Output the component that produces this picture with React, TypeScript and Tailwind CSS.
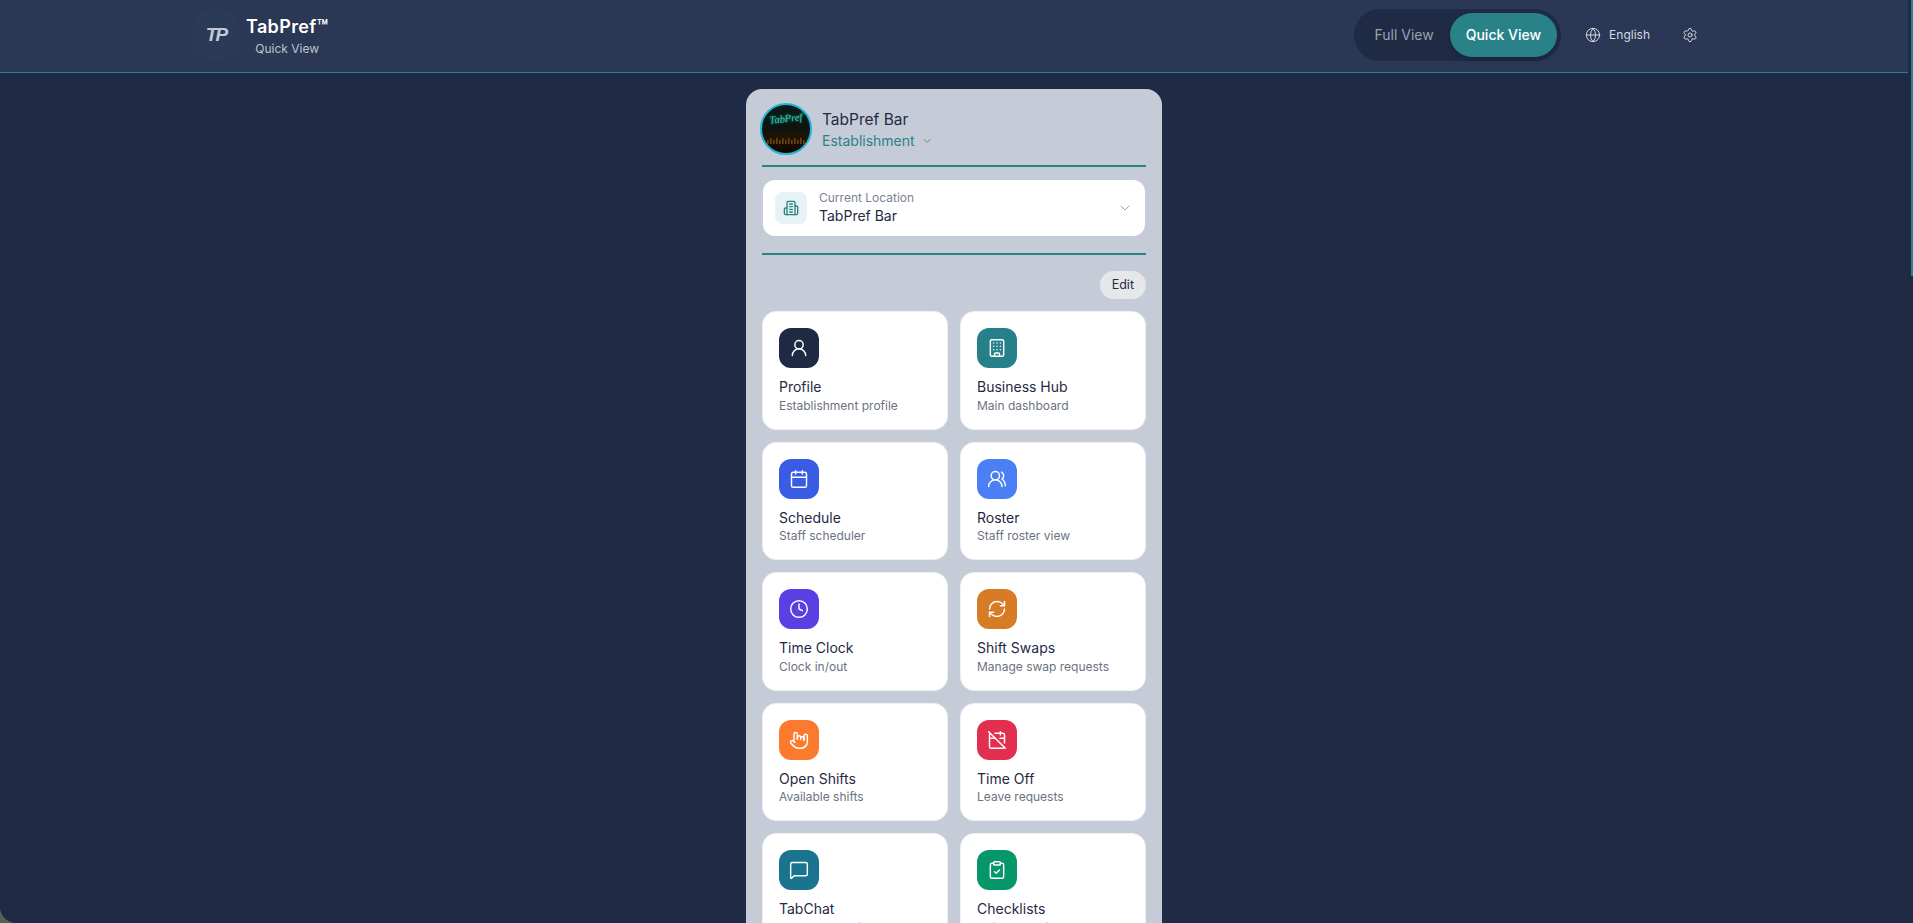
import { Building, Calendar, CalendarOff, ChevronDown, ClipboardCheck, Clock, Globe, HandMetal, MessageSquare, RefreshCw, Settings, UserRound, UsersRound } from "lucide-react";

const items = [
  { t: "Profile", d: "Establishment profile", c: "bg-[#1e2a44]", I: UserRound },
  { t: "Business Hub", d: "Main dashboard", c: "bg-[#26808a]", I: Building },
  { t: "Schedule", d: "Staff scheduler", c: "bg-[#3a5ce5]", I: Calendar },
  { t: "Roster", d: "Staff roster view", c: "bg-[#4a7ff5]", I: UsersRound },
  { t: "Time Clock", d: "Clock in/out", c: "bg-[#5a3fe3]", I: Clock },
  { t: "Shift Swaps", d: "Manage swap requests", c: "bg-[#d77b25]", I: RefreshCw },
  { t: "Open Shifts", d: "Available shifts", c: "bg-[#fb7a2e]", I: HandMetal },
  { t: "Time Off", d: "Leave requests", c: "bg-[#e22f50]", I: CalendarOff },
  { t: "TabChat", d: "Team messaging", c: "bg-[#1a7490]", I: MessageSquare },
  { t: "Checklists", d: "Daily checklists", c: "bg-[#059669]", I: ClipboardCheck },
];

function LocationIcon() {
  return (
    <svg width="16" height="16" viewBox="0 0 24 24" fill="none" stroke="currentColor" strokeWidth="2" strokeLinecap="round" strokeLinejoin="round">
      <path d="M6 22V4a2 2 0 0 1 2-2h8a2 2 0 0 1 2 2v18Z" />
      <path d="M6 12H4a2 2 0 0 0-2 2v6a2 2 0 0 0 2 2h2" />
      <path d="M18 9h2a2 2 0 0 1 2 2v9a2 2 0 0 1-2 2h-2" />
      <path d="M10 6h4" />
      <path d="M10 10h4" />
      <path d="M10 14h4" />
      <path d="M10 18h4" />
    </svg>
  );
}

export default function App() {
  return (
    <div className="h-screen overflow-hidden bg-[#55625c] font-['Inter',sans-serif]">
      <div className="relative flex h-full flex-col overflow-hidden rounded-bl-[16px] bg-[#1f2a44] pr-[5px]">
        <header className="flex h-[73px] shrink-0 items-center justify-between border-b border-[#2a8289] bg-[#2a3855] pl-[190px] pr-[210px]">
          <div className="-mt-[2px] flex items-center gap-1">
            <div className="flex h-[52px] w-[52px] items-center justify-center rounded-full bg-[#2b3a57]">
              <span className="-mt-[2px] font-['Liberation_Sans',sans-serif] text-[19px] font-black italic leading-none tracking-[-2px] text-[#c3cad6]">TP</span>
            </div>
            <div className="flex flex-col items-center">
              <div className="text-lg font-semibold leading-7 tracking-[0.02em] text-white">TabPref™</div>
              <div className="text-xs leading-4 text-[#bcc3cf]">Quick View</div>
            </div>
          </div>
          <div className="-mt-[2px] flex items-center">
            <div className="flex h-[52px] items-center rounded-full bg-[#1f2a44] p-1">
              <button className="h-11 rounded-full px-4 text-sm text-[#9aa2b1]">Full View</button>
              <button className="h-11 rounded-full bg-[#2a8289] px-4 text-sm font-medium text-white shadow-md">Quick View</button>
            </div>
            <div className="ml-6 flex items-center gap-2 text-xs text-[#d5d9e0]">
              <Globe size={16} strokeWidth={1.5} />
              <span>English</span>
            </div>
            <Settings size={16} strokeWidth={1.5} className="ml-8 text-[#d5d9e0]" />
          </div>
        </header>
        <div className="absolute right-0 top-0 h-[276px] w-[2px] bg-[#2a8289]" />
        <main className="flex flex-1 justify-center pt-4">
          <div className="h-fit w-[416px] shrink-0 rounded-2xl bg-[#c6ccd7] px-4 pb-4 pt-[14px]">
            <div className="flex items-center gap-[10px] border-b-2 border-[#2a8289] pb-[10px]">
              <div className="relative -ml-[2px] h-[52px] w-[52px] shrink-0 overflow-hidden rounded-full border-2 border-[#1fb6d6] bg-[linear-gradient(#0a1a18_0%,#0d1410_50%,#241303_68%,#0a0602_100%)]">
                <div className="absolute left-0 right-0 top-[9px] -rotate-6 text-center font-['Liberation_Serif',serif] text-[10.5px] italic leading-none text-[#35cdb2] [text-shadow:0_0_3px_#1fa58f]">TabPref</div>
                <svg viewBox="0 0 48 10" className="absolute bottom-[7px] left-0 h-[10px] w-full">
                  {[5, 8, 11, 14, 17, 20, 23, 26, 29, 32, 35, 38, 41].map((x, i) => (
                    <rect key={x} x={x} y={i % 2 ? 2 : 4} width="1.6" height={i % 2 ? 6 : 4} fill="#6b4612" />
                  ))}
                </svg>
              </div>
              <div>
                <div className="-mb-[1px] mt-[1px] text-[15.5px] leading-6 text-[#1f2a44]">TabPref Bar</div>
                <div className="flex items-center gap-[6px] text-sm leading-5 text-[#2a8289]">
                  Establishment
                  <ChevronDown size={12} strokeWidth={1.5} />
                </div>
              </div>
            </div>
            <div className="mx-[1px] mt-[13px] flex h-14 items-center gap-3 rounded-xl bg-white px-3">
              <div className="flex h-8 w-8 items-center justify-center rounded-lg bg-[#e6f2f3] text-[#2a8289]">
                <LocationIcon />
              </div>
              <div className="flex-1">
                <div className="text-xs leading-4 text-[#7b8393]">Current Location</div>
                <div className="text-sm leading-5 text-[#1f2a44]">TabPref Bar</div>
              </div>
              <ChevronDown size={16} strokeWidth={1.5} className="text-[#9aa2b1]" />
            </div>
            <div className="mt-[17px] h-[2px] bg-[#2a8289]" />
            <div className="mt-4 flex justify-end">
              <button className="h-7 rounded-full bg-[#e5e7eb] px-3 text-[12.5px] text-[#1f2a44]">Edit</button>
            </div>
            <div className="mt-3 grid grid-cols-2 gap-3">
              {items.map(({ t, d, c, I }) => (
                <div key={t} className="h-[118.5px] rounded-[14px] border border-[#eef0f3] bg-white p-4">
                  <div className={`flex h-10 w-10 items-center justify-center rounded-xl ${c}`}>
                    <I size={20} strokeWidth={1.75} className="text-white" />
                  </div>
                  <div className="mt-[9px] text-sm leading-5 text-[#1f2a44]">{t}</div>
                  <div className="mt-[0.5px] text-xs leading-4 text-[#6b7280]">{d}</div>
                </div>
              ))}
            </div>
          </div>
        </main>
      </div>
    </div>
  );
}
